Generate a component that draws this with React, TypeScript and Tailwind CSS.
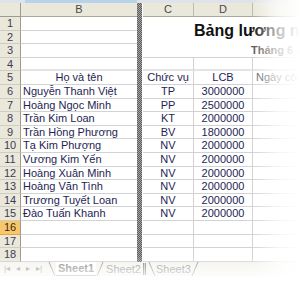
import type { ReactNode } from 'react';

type Person = { name: string; role: string; lcb: string };

const people: Person[] = [
  { name: 'Nguyễn Thanh Việt', role: 'TP', lcb: '3000000' },
  { name: 'Hoàng Ngọc Minh', role: 'PP', lcb: '2500000' },
  { name: 'Trần Kim Loan', role: 'KT', lcb: '2000000' },
  { name: 'Trần Hồng Phương', role: 'BV', lcb: '1800000' },
  { name: 'Tạ Kim Phượng', role: 'NV', lcb: '2000000' },
  { name: 'Vương Kim Yến', role: 'NV', lcb: '2000000' },
  { name: 'Hoàng Xuân Minh', role: 'NV', lcb: '2000000' },
  { name: 'Hoàng Văn Tình', role: 'NV', lcb: '2000000' },
  { name: 'Trương Tuyết Loan', role: 'NV', lcb: '2000000' },
  { name: 'Đào Tuấn Khanh', role: 'NV', lcb: '2000000' },
];

// row heights 1..18 (screenshot is scaled, so they alternate)
const heights = [
  'h-[14px]', 'h-[13px]', 'h-[14px]', 'h-[13px]', 'h-[14px]', 'h-[14px]',
  'h-[13px]', 'h-[14px]', 'h-[13px]', 'h-[14px]', 'h-[14px]', 'h-[13px]',
  'h-[14px]', 'h-[13px]', 'h-[14px]', 'h-[14px]', 'h-[13px]', 'h-[14px]',
];

function ColHead({ className, children }: { className: string; children?: ReactNode }) {
  return (
    <div className={`h-[14px] bg-[#e9e8da] border-b border-[#a9a799] border-r border-r-[#bdbbac] flex items-center justify-center text-[#4a4a4a] ${className}`}>
      {children}
    </div>
  );
}

function Row({ n, b, bClass = '' }: { n: number; b?: ReactNode; bClass?: string }) {
  const active = n === 16;
  return (
    <div className={`flex ${heights[n - 1]}`}>
      <div
        className={`w-[21px] shrink-0 flex items-center justify-center border-r border-[#9d9b8e] border-b ${
          active ? 'bg-[#f8c76b] border-b-[#e5a53a] text-[#3a2c10]' : 'bg-[#e9e8da] border-b-[#cfcdbf] text-[#3c3c55]'
        }`}
      >
        {n}
      </div>
      <div className={`w-[116px] shrink-0 border-b border-[#d2d2d2] flex items-center px-[2px] whitespace-nowrap overflow-hidden ${bClass}`}>
        {b}
      </div>
    </div>
  );
}

function RightRow({ n, c, d, e, cls = '' }: { n: number; c?: ReactNode; d?: ReactNode; e?: ReactNode; cls?: string }) {
  return (
    <div className={`flex ${heights[n - 1]}`}>
      <div className={`w-[51px] shrink-0 border-r border-b border-[#d2d2d2] flex items-center justify-center whitespace-nowrap ${cls}`}>{c}</div>
      <div className={`w-[59px] shrink-0 border-r border-b border-[#d2d2d2] flex items-center justify-center whitespace-nowrap ${cls}`}>{d}</div>
      <div className={`flex-1 border-b border-[#d2d2d2] flex items-center px-[3px] whitespace-nowrap overflow-hidden ${cls}`}>{e}</div>
    </div>
  );
}

function TabSlash({ dir }: { dir: 'l' | 'r' }) {
  return (
    <svg width="8" height="14" viewBox="0 0 8 14" className="shrink-0">
      {dir === 'l' ? (
        <line x1="1" y1="0" x2="7" y2="14" stroke="#8c8c8c" strokeWidth="1" />
      ) : (
        <line x1="7" y1="0" x2="1" y2="14" stroke="#8c8c8c" strokeWidth="1" />
      )}
    </svg>
  );
}

export default function App() {
  return (
    <div className="relative w-[300px] h-[296px] overflow-hidden bg-white text-[11px] leading-none text-[#1e1e52] font-['Liberation_Sans',Arial,sans-serif]">
      <div className="h-[3px] flex bg-[#dfe2e8]">
        <div className="ml-[25px] w-[112px] bg-[#b9d2ec]" />
      </div>

      <div className="flex">
        {/* row headers + column B */}
        <div className="flex flex-col w-[137px] shrink-0">
          <div className="flex">
            <div className="w-[21px] h-[14px] bg-[#e9e8da] border-b border-r border-[#9d9b8e]" />
            <ColHead className="w-[116px] border-r-0">B</ColHead>
          </div>
          <Row n={1} />
          <Row n={2} />
          <Row n={3} />
          <Row n={4} bClass="border-b-2 border-b-[#e4e4e4]" />
          <Row n={5} b={<span className="w-full text-center">Họ và tên</span>} />
          {people.map((p, i) => (
            <Row key={p.name} n={i + 6} b={p.name} />
          ))}
          <Row n={16} />
          <Row n={17} />
          <Row n={18} />
        </div>

        {/* frozen split bar */}
        <div className="w-[5px] shrink-0 h-[259px] bg-[repeating-conic-gradient(#5f5f5f_0_25%,#a3a3a3_0_50%)] bg-[length:2px_2px]" />

        {/* columns C, D, E */}
        <div className="flex flex-col flex-1 ml-[1px]">
          <div className="flex">
            <ColHead className="w-[51px]">C</ColHead>
            <ColHead className="w-[59px]">D</ColHead>
            <ColHead className="flex-1 border-r-0">E</ColHead>
          </div>
          <div className="h-[27px] flex items-center pl-[51px] whitespace-nowrap overflow-hidden">
            <span className="text-[16px] font-bold text-[#111]">Bảng lương nhân viên</span>
          </div>
          <div className="h-[14px] border-b border-[#d2d2d2] flex items-center pl-[108px] whitespace-nowrap overflow-hidden">
            <span className="font-bold text-[#555]">Tháng 6 - 2008</span>
          </div>
          <RightRow n={4} cls="border-b-2 border-b-[#e4e4e4]" />
          <RightRow n={5} c="Chức vụ" d="LCB" e={<span className="text-[#555]">Ngày công</span>} />
          {people.map((p, i) => (
            <RightRow key={p.name} n={i + 6} c={p.role} d={p.lcb} />
          ))}
          <RightRow n={16} />
          <RightRow n={17} />
          <RightRow n={18} />
        </div>
      </div>

      {/* sheet tabs */}
      <div className="flex items-center h-[14px] bg-[#f4f3ec] text-[#6d6d6d]">
        <div className="flex items-center gap-[6px] pl-[4px] w-[48px] text-[8px] text-[#8d8d8d]">
          <span>|◂</span>
          <span>◂</span>
          <span>▸</span>
          <span>▸|</span>
        </div>
        <TabSlash dir="l" />
        <div className="flex items-center h-full bg-white px-[2px] font-bold text-[#7d7d7d] border-b border-[#8c8c8c]">Sheet1</div>
        <TabSlash dir="r" />
        <span className="pl-[2px] text-[#8a8a8a]">Sheet2</span>
        <div className="ml-[1px] w-[6px] h-full flex items-center justify-center">
          <div className="w-[3px] h-[12px] border-x border-[#7a7a7a] bg-[#c8c8c8]" />
        </div>
        <TabSlash dir="l" />
        <span className="text-[#8a8a8a]">Sheet3</span>
        <TabSlash dir="r" />
      </div>

      {/* fade overlays */}
      <div className="pointer-events-none absolute top-0 right-0 w-[48px] h-full bg-gradient-to-r from-white/0 via-white/70 to-white" />
      <div className="pointer-events-none absolute left-0 bottom-0 w-full h-[40px] bg-gradient-to-b from-white/0 via-white/75 to-white" />
    </div>
  );
}
